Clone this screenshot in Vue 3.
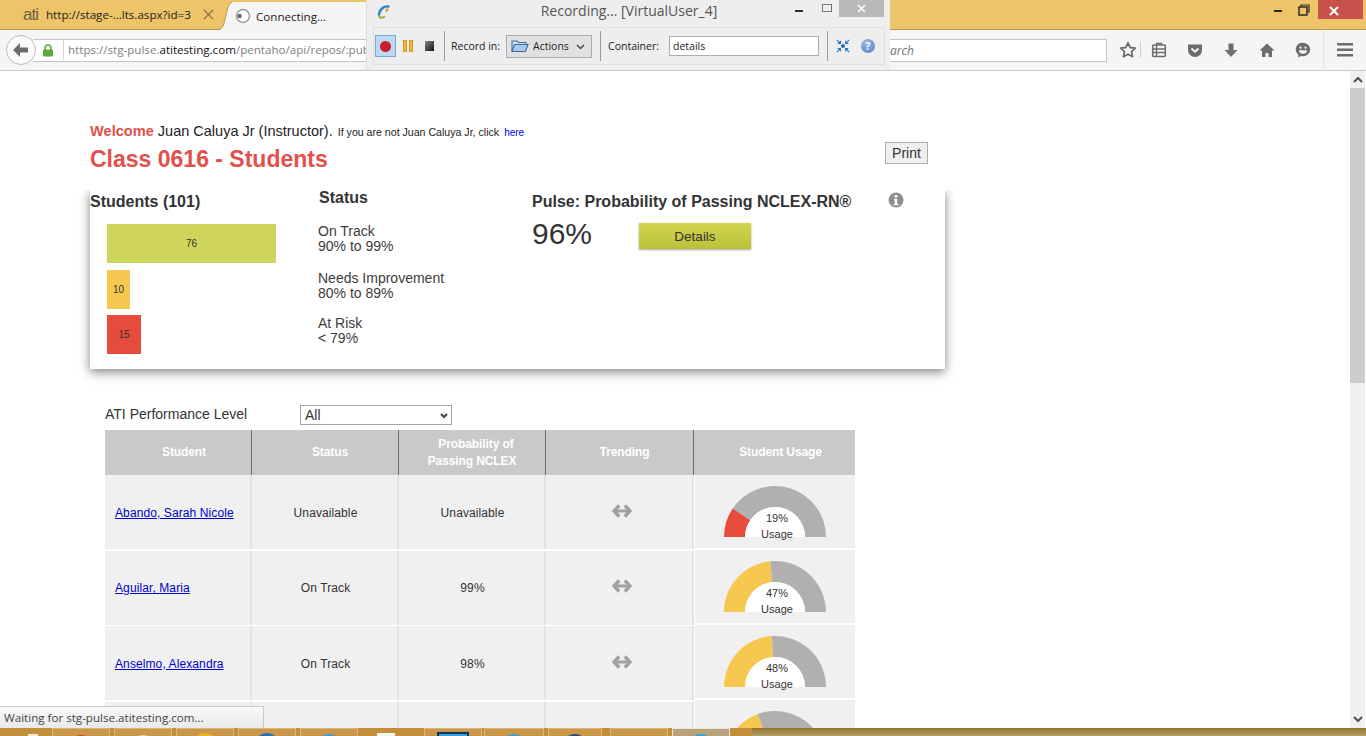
<script setup>
const students = [
  { name: 'Abando, Sarah Nicole', status: 'Unavailable', prob: 'Unavailable', usage: 19 },
  { name: 'Aguilar, Maria', status: 'On Track', prob: '99%', usage: 47 },
  { name: 'Anselmo, Alexandra', status: 'On Track', prob: '98%', usage: 48 },
  { name: '', status: '', prob: '', usage: 39 },
]
const R = 51
const r = 30
const cx = 52
const cy = 52
function pt(radius, pct) {
  const a = Math.PI * (1 - pct / 100)
  return `${(cx + radius * Math.cos(a)).toFixed(2)} ${(cy - radius * Math.sin(a)).toFixed(2)}`
}
function arc(from, to) {
  return `M${pt(R, from)} A${R} ${R} 0 0 1 ${pt(R, to)} L${pt(r, to)} A${r} ${r} 0 0 0 ${pt(r, from)} Z`
}
function gaugeColor(p) {
  return p < 25 ? '#e74c3c' : '#f7c850'
}
const taskButtons = [
  { w: 58, ml: 0, c: '#d9402f', top: 6 },
  { w: 58, ml: 4, c: '#d9d2b8', top: 6 },
  { w: 58, ml: 4, c: '#e8b52a', top: 4 },
  { w: 58, ml: 4, c: '#2c6fb5', top: 4 },
  { w: 58, ml: 4, c: '#3a9fd5', top: 5 },
  { w: 58, ml: 66, c: '', top: 4, active: true },
  { w: 60, ml: 2, c: '#3a9fd5', top: 5 },
  { w: 54, ml: 4, c: '#2c4a73', top: 5 },
  { w: 58, ml: 8, c: '', top: 0 },
  { w: 58, ml: 4, c: '#3a9fd5', top: 5, hot: true },
]
</script>

<template>
  <div class="screen">
    <header class="titlebar">
      <div class="tab inactive">
        <span class="ati">ati</span>
        <span class="tabtext">http://stage-...lts.aspx?id=3</span>
        <svg class="tabclose" width="11" height="11" viewBox="0 0 12 12"><path d="M1 1l10 10M11 1L1 11" stroke="#7b6a45" stroke-width="1.3" fill="none"/></svg>
      </div>
      <svg class="curve" width="15" height="28" viewBox="0 0 15 28"><path d="M0 28C6 28 7 22 9 13 10.500 6 12 1 15 0V28Z" fill="#f5f5f5"/><path d="M0 28C6 28 7 22 9 13 10.500 6 12 1 15 0" fill="none" stroke="#b39a4a"/></svg>
      <div class="tab active">
        <svg width="16" height="16" viewBox="0 0 16 16"><circle cx="8" cy="8" r="6.500" fill="#fff" stroke="#9a9a9a" stroke-width="1.400"/><circle cx="4.500" cy="8" r="2.200" fill="#666"/></svg>
        <span class="tabtext">Connecting...</span>
      </div>
      <div class="winbtns">
        <svg width="12" height="12" viewBox="0 0 12 12"><rect x="1" y="8" width="8" height="2" fill="#2b2b2b"/></svg>
        <svg width="12" height="12" viewBox="0 0 12 12"><path d="M3 3V1h8v7H9" fill="none" stroke="#2b2b2b" stroke-width="1.200"/><rect x="1" y="3" width="8" height="8" fill="none" stroke="#2b2b2b" stroke-width="1.500"/></svg>
        <div class="close"><svg width="10" height="10" viewBox="0 0 10 10"><path d="M1 1l8 8M9 1L1 9" stroke="#fff" stroke-width="2"/></svg></div>
      </div>
    </header>

    <nav class="toolbar">
      <div class="back"><svg width="18" height="16" viewBox="0 0 18 16"><path d="M8 1L1 8l7 7V10.500h8v-5H8z" fill="#6d6d6d"/></svg></div>
      <div class="urlbar">
        <svg class="lock" width="12" height="13" viewBox="0 0 12 13"><path d="M3 6V4a3 3 0 0 1 6 0v2" fill="none" stroke="#5ca83a" stroke-width="1.600"/><rect x="1" y="5.500" width="10" height="7" rx="1" fill="#5ca83a"/></svg>
        <span class="url">https://stg-pulse.<b>atitesting.com</b>/pentaho/api/repos/:pub</span>
      </div>
      <div class="searchbar"><i>arch</i></div>
      <div class="tools">
        <svg width="18" height="18" viewBox="0 0 18 18"><path d="M9 1.800l2.200 4.700 5.100.6-3.800 3.500 1 5.100L9 13.200l-4.500 2.500 1-5.100L1.700 7.100l5.100-.6z" fill="none" stroke="#6d6d6d" stroke-width="1.800" stroke-linejoin="round"/></svg>
        <span class="tsep"></span>
        <svg class="ti1" width="16" height="16" viewBox="0 0 16 16"><rect x="1.700" y="3" width="12.600" height="11.500" rx="1" fill="none" stroke="#6d6d6d" stroke-width="1.600"/><path d="M5.500 3V1.500h5V3M5.500 3v11M2 7h12M2 10.500h12" stroke="#6d6d6d" stroke-width="1.400" fill="none"/></svg>
        <svg class="ti2" width="16" height="16" viewBox="0 0 16 16"><path d="M1 2.500h14v5.500a7 7 0 0 1-14 0z" fill="#6d6d6d"/><path d="M4.500 6.500L8 9.700l3.500-3.200" stroke="#f5f5f5" stroke-width="2" fill="none"/></svg>
        <svg class="ti3" width="16" height="16" viewBox="0 0 16 16"><path d="M5.500 1.500h5V8h4L8 15 1.500 8h4z" fill="#6d6d6d"/></svg>
        <svg class="ti4" width="16" height="16" viewBox="0 0 16 16"><path d="M8 1.500L.5 8.500h2.500V15h3.500v-4h3v4H13V8.500h2.500z" fill="#6d6d6d"/></svg>
        <svg class="ti5" width="16" height="16" viewBox="0 0 16 16"><path d="M8 .7a7.200 6.800 0 0 1 0 13.600c-.8 0-1.500-.1-2.200-.3L3 15.500l.3-2.700A6.800 6.800 0 0 1 8 .7z" fill="#6d6d6d"/><circle cx="5.500" cy="5.700" r="1.100" fill="#f5f5f5"/><circle cx="10.500" cy="5.700" r="1.100" fill="#f5f5f5"/><path d="M4 8.200h8a4 3.500 0 0 1-8 0z" fill="#f5f5f5"/></svg>
        <span class="tsep menu-sep"></span>
        <svg class="ti6" width="16" height="14" viewBox="0 0 16 14"><path d="M0 0h16v2.500H0zM0 5.500h16V8H0zM0 11h16v2.500H0z" fill="#6d6d6d"/></svg>
      </div>
    </nav>

    <div class="viewport">
      <main class="page">
        <div class="welcome"><b>Welcome</b> <span class="who">Juan Caluya Jr (Instructor).</span> <small>If you are not Juan Caluya Jr, click</small> <a class="here" href="#">here</a></div>
        <div class="titlerow">
          <h1>Class 0616 - Students</h1>
          <button class="print">Print</button>
        </div>

        <section class="card">
          <div class="colbars">
            <h2>Students (101)</h2>
            <div class="bar green">76</div>
            <div class="bar yellow">10</div>
            <div class="bar red">15</div>
          </div>
          <div class="colstatus">
            <h2>Status</h2>
            <p class="s1">On Track<br>90% to 99%</p>
            <p class="s2">Needs Improvement<br>80% to 89%</p>
            <p class="s3">At Risk<br>&lt; 79%</p>
          </div>
          <div class="colpulse">
            <h2>Pulse: Probability of Passing NCLEX-RN®</h2>
            <div class="pulserow">
              <span class="big">96%</span>
              <div class="details">Details</div>
            </div>
          </div>
          <svg class="info" width="16" height="16" viewBox="0 0 16 16"><circle cx="8" cy="8" r="7.500" fill="#8f8f8f"/><circle cx="8" cy="4.200" r="1.500" fill="#fff"/><path d="M6 7h3.200v5H10.500v1.300h-5V12h1.200V8.300H6z" fill="#fff"/></svg>
        </section>

        <div class="filter">
          <label>ATI Performance Level</label>
          <select><option>All</option></select>
        </div>

        <div class="table">
          <div class="maincols">
            <div class="hrow">
              <div class="th"><span class="sh12">Student</span></div>
              <div class="th"><span class="sh10">Status</span></div>
              <div class="th"><span><span class="pline">Probability of</span><br>Passing NCLEX</span></div>
              <div class="th"><span class="sh10">Trending</span></div>
            </div>
            <div v-for="(s, i) in students" :key="i" class="row">
              <div class="td namecell"><a v-if="s.name" href="#">{{ s.name }}</a></div>
              <div class="td">{{ s.status }}</div>
              <div class="td">{{ s.prob }}</div>
              <div class="td trend">
                <svg v-if="s.name" width="20" height="14" viewBox="0 0 20 14"><path d="M7.200 1.500L2 7l5.200 5.500M12.800 1.500L18 7l-5.200 5.500" fill="none" stroke="#a0a0a0" stroke-width="3.400"/><path d="M3 7h14" stroke="#a0a0a0" stroke-width="3"/></svg>
              </div>
            </div>
          </div>
          <div class="usagecol">
            <div class="th usagehead"><span class="sh12">Student Usage</span></div>
            <div v-for="(s, i) in students" :key="i" class="ucell">
              <div class="gauge">
                <svg width="104" height="54" viewBox="0 0 104 54">
                  <path :d="arc(0, s.usage)" :fill="gaugeColor(s.usage)"/>
                  <path :d="arc(s.usage, 100)" fill="#b0b0b0"/>
                  <path :d="`M${cx - r} ${cy} A${r} ${r} 0 0 1 ${cx + r} ${cy} Z`" fill="#fff"/>
                </svg>
                <div v-if="s.name" class="glabel">{{ s.usage }}%<br>Usage</div>
              </div>
            </div>
          </div>
        </div>
      </main>
      <aside class="scrollbar">
        <div class="sbtn"><svg width="10" height="7" viewBox="0 0 10 7"><path d="M1 6l4-4 4 4" fill="none" stroke="#505050" stroke-width="2"/></svg></div>
        <div class="thumb"></div>
        <div class="track"></div>
        <div class="sbtn"><svg width="10" height="7" viewBox="0 0 10 7"><path d="M1 1l4 4 4-4" fill="none" stroke="#505050" stroke-width="2"/></svg></div>
      </aside>
    </div>

    <div class="statusbar">Waiting for stg-pulse.atitesting.com...</div>

    <footer class="taskbar">
      <span class="startglyph"></span>
      <div v-for="(b, i) in taskButtons" :key="i" class="tbtn" :class="{ hot: b.hot }" :style="{ width: b.w + 'px', marginLeft: b.ml + 'px' }">
        <span v-if="b.active" class="tactive"></span>
        <span v-else-if="b.c" class="tglyph" :style="{ background: b.c, marginTop: b.top + 'px' }"></span>
      </div>
      <span class="tnote"></span>
      <div class="tfill"></div>
    </footer>

    <div class="recorder">
      <div class="rtitle">
        <svg class="rlogo" width="16" height="16" viewBox="0 0 16 16"><path d="M12.500 2.500C8 1.500 3 6 3 11" fill="none" stroke="#3a7fc4" stroke-width="2.400" stroke-linecap="round"/><path d="M3 11c0 3 3 3.500 6 1.500" fill="none" stroke="#8db64a" stroke-width="2"/><path d="M12 4.500c-.5 1-1 2-2.500 3" fill="none" stroke="#d8a62b" stroke-width="2"/></svg>
        <span class="rname">Recording... [VirtualUser_4]</span>
        <div class="rwin">
          <span class="rmin"></span>
          <span class="rmax"></span>
          <span class="rclose"><svg width="9" height="9" viewBox="0 0 9 9"><path d="M1 1l7 7M8 1L1 8" stroke="#fff" stroke-width="1.600"/></svg></span>
        </div>
      </div>
      <div class="rbar">
        <div class="rec"><span></span></div>
        <div class="pause"><i></i><i></i></div>
        <div class="stop"></div>
        <span class="rsep s-a"></span>
        <span class="rlabel">Record in:</span>
        <div class="combo">
          <svg width="18" height="14" viewBox="0 0 18 14"><path d="M1 12.500V2h5l1.500 1.500H15v2" fill="#cfe0f2" stroke="#3c6ea5" stroke-width="1.100"/><path d="M1 12.500l2.500-7H17l-2.500 7z" fill="#a9c9ea" stroke="#3c6ea5" stroke-width="1.100"/></svg>
          <span>Actions</span>
          <svg class="chev" width="9" height="6" viewBox="0 0 9 6"><path d="M1 1l3.500 3.500L8 1" fill="none" stroke="#444" stroke-width="1.500"/></svg>
        </div>
        <span class="rsep s-b"></span>
        <span class="rlabel">Container:</span>
        <div class="rinput">details</div>
        <span class="rsep s-c"></span>
        <svg class="collapse" width="14" height="14" viewBox="0 0 16 16"><circle cx="8" cy="8" r="2.300" fill="#1f6fc0"/><path d="M1 1l4 4M5 2v3H2M15 1l-4 4M11 2v3h3M1 15l4-4M5 14v-3H2M15 15l-4-4M11 14v-3h3" stroke="#1f6fc0" stroke-width="1.200" fill="none"/></svg>
        <div class="help">?</div>
      </div>
    </div>
  </div>
</template>

<style scoped>
.screen { position: relative; width: 1366px; height: 736px; overflow: hidden; display: flex; flex-direction: column; font-family: "Liberation Sans", Arial, sans-serif; color: #333; background: #fff; }

.titlebar { height: 30px; flex: none; box-sizing: border-box; background: #edc467; border-bottom: 1px solid #b39a4a; display: flex; align-items: flex-end; font-family: "Open Sans", sans-serif; font-size: 11.600px; color: #222; }
.tab { display: flex; align-items: center; box-sizing: border-box; }
.tab.inactive { width: 217px; height: 29px; padding-left: 23px; flex: none; }
.ati { font-size: 17px; color: #6d6344; width: 23px; letter-spacing: -1px; font-family: "Liberation Sans", sans-serif; }
.tabclose { margin-left: 7px; }
.tab.inactive .tabtext { width: 150px; white-space: nowrap; }
.curve { flex: none; margin-bottom: -1px; overflow: visible; }
.tab.active { width: 142px; flex: none; padding-left: 3px; gap: 5px; background: #f5f5f5; height: 28px; margin-bottom: -1px; }
.winbtns { margin-left: auto; height: 29px; display: flex; align-items: flex-start; }
.winbtns svg:nth-child(1) { margin: 2px 13px 0 0; }
.winbtns svg:nth-child(2) { margin: 4px 8px 0 0; }
.close { width: 45px; height: 19px; background: #c9504b; display: flex; align-items: center; justify-content: center; margin-right: 3px; }

.toolbar { height: 41px; flex: none; box-sizing: border-box; background: #f5f5f5; border-bottom: 1px solid #c9c9c9; display: flex; align-items: center; padding-left: 6px; font-family: "Open Sans", sans-serif; }
.back { width: 30px; height: 30px; box-sizing: border-box; border-radius: 50%; background: #fbfbfb; border: 1px solid #bcbcbc; display: flex; align-items: center; justify-content: center; position: relative; z-index: 1; }
.urlbar { margin-left: -3px; width: 400px; height: 23px; box-sizing: border-box; background: #fff; border: 1px solid #c5c5c5; border-left: 0; display: flex; align-items: center; padding-left: 9px; font-size: 11.600px; color: #808080; white-space: nowrap; overflow: hidden; }
.url { margin-left: 9px; padding-left: 4px; border-left: 1px solid #d5d5d5; line-height: 20px; }
.url b { font-weight: 400; color: #111; }
.searchbar { display: flex; margin-left: 8px; flex: 1; height: 23px; box-sizing: border-box; background: #fff; border: 1px solid #c5c5c5; align-items: center; padding-left: 448px; font-size: 12px; color: #777; }
.tools { width: 259px; flex: none; display: flex; align-items: center; padding-left: 12px; box-sizing: border-box; }
.tsep { width: 1px; height: 16px; background: #cfcfcf; margin: 0 10px 0 3px; }
.ti2, .ti3, .ti4, .ti5 { margin-left: 20px; }
.menu-sep { height: 38px; margin: 0 13px 0 12px; background: #e4e4e4; }

.viewport { flex: 1; min-height: 0; display: flex; }
.page { flex: 1; min-width: 0; overflow: hidden; padding: 52px 0 0 90px; box-sizing: border-box; }
.welcome { font-size: 14.500px; color: #222; height: 17px; line-height: 17px; white-space: nowrap; }
.welcome b { color: #e2504c; font-size: 14.600px; }
.welcome small { font-size: 10.600px; margin-left: 1px; }
.here { font-size: 10px; color: #00e; text-decoration: none; margin-left: 1px; }
.titlerow { display: flex; align-items: flex-start; }
h1 { margin: 6px 0 0; font-size: 23px; line-height: 27px; color: #e2504c; font-weight: 700; width: 795px; }
.print { width: 43px; height: 22px; margin-top: 2px; padding: 0; font: 14px "Liberation Sans", sans-serif; color: #333; background: #efefef; border: 1px solid #adadad; border-radius: 0; }

.card { position: relative; width: 855px; height: 179px; margin-top: 17px; background: #fff; box-shadow: 0 3px 10px rgba(0,0,0,.5); clip-path: inset(0 -20px -20px -20px); display: grid; grid-template-columns: 228px 214px 1fr; }
h2 { margin: 0; font-size: 16px; font-weight: 700; color: #333; line-height: 20px; }
.colbars h2 { margin-top: 2px; }
.bar { margin-left: 17px; height: 39px; display: flex; align-items: center; justify-content: center; font-size: 10px; color: #333; }
.bar.green { width: 169px; background: #cfd45a; margin-top: 12px; }
.bar.yellow { width: 23px; background: #f7c850; margin-top: 7px; }
.bar.red { width: 34px; background: #e64c3e; margin-top: 6px; }
.colstatus h2 { margin: -2px 0 0 1px; }
.colstatus p { margin: 0; font-size: 14px; line-height: 15px; color: #3c3c3c; }
.s1 { padding-top: 16px; }
.s2 { padding-top: 17px; }
.s3 { padding-top: 15px; }
.colpulse h2 { margin-top: 2px; }
.pulserow { display: flex; align-items: flex-start; margin-top: 11px; }
.big { font-size: 30px; line-height: 22px; width: 107px; }
.details { width: 112px; height: 26px; background: linear-gradient(#d0d44e, #bcc13a); box-shadow: 0 1px 2px rgba(0,0,0,.35); display: flex; align-items: center; justify-content: center; font-size: 13.500px; color: #333; }
.info { position: absolute; left: 798px; top: 2px; }

.filter { display: flex; align-items: center; margin: 36px 0 0 15px; height: 20px; font-size: 14px; }
.filter label { width: 195px; margin-top: -2px; }
.filter select { appearance: none; width: 152px; height: 20px; font: 14px "Liberation Sans", sans-serif; color: #333; background: #fff url("data:image/svg+xml,%3Csvg xmlns='http://www.w3.org/2000/svg' width='8' height='6'%3E%3Cpath d='M1 1l3 3 3-3' fill='none' stroke='%23444' stroke-width='2'/%3E%3C/svg%3E") no-repeat 139px 7px; border: 1px solid #a6a6a6; padding: 0 0 0 4px; border-radius: 0; }

.table { display: flex; margin: 5px 0 0 15px; width: 750px; font-size: 12px; letter-spacing: .1px; }
.maincols { width: 589px; }
.hrow, .row { display: grid; grid-template-columns: 147px 147px 147px 148px; }
.hrow { height: 45px; }
.th { background: #c9c9c9; color: #fff; font-weight: 700; display: flex; align-items: center; justify-content: center; text-align: center; line-height: 17px; border-right: 1px solid #6e6e6e; box-sizing: border-box; height: 45px; letter-spacing: -.1px; }
.sh12 { margin-left: 12px; }
.sh10 { margin-left: 10px; }
.pline { padding-left: 8px; }
.row { height: 75.600px; }
.td { background: #f0f0f0; height: 74px; border-right: 2px solid #e2e2e2; box-sizing: border-box; display: flex; align-items: center; justify-content: center; color: #333; padding: 1px 0 0 2px; }
.namecell { justify-content: flex-start; padding-left: 10px; }
.namecell a { color: #00c; }
.trend { padding: 0 0 3px 6px; }
.usagecol { width: 161px; }
.usagehead { border-right: 0; height: 45px; }
.ucell { height: 73px; margin: 0 0 2px 1px; background: #f0f0f0; display: flex; justify-content: flex-start; }
.gauge { position: relative; width: 104px; height: 62px; margin: 10px 0 0 28px; }
.gauge svg { display: block; }
.glabel { position: absolute; left: 2px; right: -2px; top: 25px; text-align: center; font-size: 11px; line-height: 16px; color: #333; letter-spacing: 0; }

.scrollbar { width: 15px; margin-right: 1px; flex: none; display: flex; flex-direction: column; background: #f0f0f0; }
.sbtn { height: 17px; display: flex; align-items: center; justify-content: center; flex: none; }
.thumb { height: 295px; flex: none; background: #cdcdcd; }
.track { flex: 1; }

.statusbar { position: absolute; left: 0; top: 706px; width: 264px; height: 22px; box-sizing: border-box; background: linear-gradient(#f9f9f9, #e9e9e9); border: 1px solid #c9c9c9; border-left: 0; border-bottom: 0; font-family: "Open Sans", sans-serif; font-size: 11.600px; color: #444; line-height: 22px; padding-left: 4px; }

.taskbar { height: 8px; flex: none; display: flex; background: #c48f3c; padding-left: 52px; box-sizing: border-box; overflow: hidden; position: relative; }
.startglyph { position: absolute; left: 28px; top: 6px; width: 10px; height: 6px; background: #f0ead8; }
.tbtn { flex: none; height: 8px; box-sizing: border-box; background: #c9964a; border: 1px solid #dcb578; border-bottom: 0; display: flex; justify-content: center; }
.tglyph { width: 18px; height: 12px; border-radius: 50%; }
.tactive { width: 32px; height: 6px; margin-top: 3px; box-sizing: border-box; background: #3a9fd5; border: 2px solid #10355e; border-bottom: 0; }
.tbtn.hot { background: #b7a27c; border-color: #e9e4d6; }
.tnote { position: absolute; left: 377px; top: 5px; width: 18px; height: 6px; background: #f4f4f4; }
.tfill { flex: 1; background: linear-gradient(#8f7030, #b79f6a); margin-left: 22px; }

.recorder { position: absolute; left: 366px; top: 0; width: 524px; height: 70px; background: #eee; font-family: "Open Sans", sans-serif; color: #222; border-left: 1px solid #ddd; box-sizing: border-box; }
.rtitle { height: 27px; display: flex; align-items: flex-start; position: relative; }
.rlogo { margin: 4px 0 0 9px; }
.rname { position: absolute; left: 0; width: 524px; text-align: center; top: 1px; font-size: 14px; line-height: 20px; color: #555; }
.rwin { margin-left: auto; display: flex; align-items: flex-start; }
.rmin { width: 8px; height: 2px; background: #333; margin: 10px 0 0; }
.rmax { width: 8px; height: 6px; border: 1px solid #777; margin: 4px 7px 0 19px; }
.rclose { width: 45px; height: 17px; background: #b9b9b9; display: flex; align-items: center; justify-content: center; margin-right: 6px; }
.rbar { margin: 0 5px 0 6px; height: 36px; border: 1px solid #dfdfdf; display: flex; align-items: center; font-size: 10.500px; position: relative; }
.rec { width: 21px; height: 22px; margin-left: 1px; background: #bcd8f2; border: 1px solid #7aa7d4; display: flex; align-items: center; justify-content: center; box-sizing: border-box; }
.rec span { width: 11px; height: 11px; border-radius: 50%; background: #c8202a; }
.pause { display: flex; gap: 2px; margin-left: 7px; }
.pause i { width: 2px; height: 10px; background: #f2b63d; border: 1px solid #d49a1f; }
.stop { width: 9px; height: 10px; background: linear-gradient(135deg, #888, #111); margin-left: 12px; }
.rsep { width: 1px; height: 30px; background: #9a9a9a; }
.s-a { margin: 0 6px 0 10px; }
.s-b { margin: 0 7px 0 8px; }
.s-c { margin: 0 8px 0 8px; }
.rlabel { white-space: nowrap; }
.combo { margin-left: 6px; width: 86px; height: 23px; box-sizing: border-box; background: #e1e1e1; border: 1px solid #adadad; display: flex; align-items: center; gap: 4px; padding-left: 4px; position: relative; }
.chev { position: absolute; right: 6px; top: 8px; }
.rinput { margin-left: 10px; width: 150px; height: 20px; box-sizing: border-box; background: #fff; border: 1px solid #adadad; line-height: 18px; padding-left: 3px; }
.help { width: 14px; height: 14px; border-radius: 50%; background: radial-gradient(circle at 40% 30%, #9bbdea, #4b7ec4); color: #fff; font-size: 10px; font-weight: 700; line-height: 14px; text-align: center; margin-left: 11px; }
</style>

<style>
html, body { margin: 0; overflow: hidden; }
</style>
